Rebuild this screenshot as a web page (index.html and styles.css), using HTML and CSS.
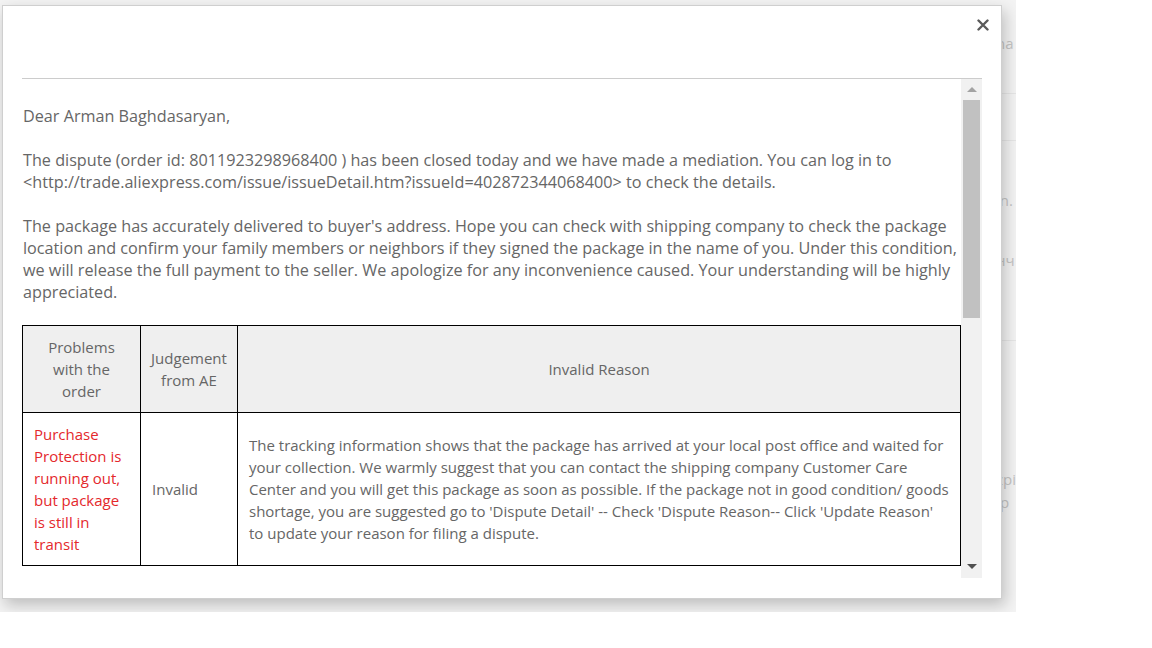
FILE: index.html
```html
<!DOCTYPE html>
<html>
<head>
<meta charset="utf-8">
<link rel="stylesheet" href="styles.css">
</head>
<body>
<div class="screen">
  <div class="page-bg">
    <div class="bg-row r1">na</div>
    <div class="bg-rule r2"></div>
    <div class="bg-rule r3"></div>
    <div class="bg-row r4">in.</div>
    <div class="bg-row r5">нч</div>
    <div class="bg-rule r6"></div>
    <div class="bg-row r7">zpi</div>
    <div class="bg-row r8">&nbsp;p</div>
  </div>

  <div class="modal">
    <div class="modal-head">
      <button class="close" aria-label="Close">
        <svg width="12" height="12" viewBox="0 0 12 12"><path d="M1.5 1.5 L10.5 10.5 M10.5 1.5 L1.5 10.5" stroke="#5a5a5a" stroke-width="2.4" stroke-linecap="round"/></svg>
      </button>
    </div>
    <div class="scroller">
      <div class="content">
        <p>Dear Arman Baghdasaryan,</p>
        <p>The dispute (order id: 8011923298968400 ) has been closed today and we have made a mediation. You can log in to &lt;http://trade.aliexpress.com/issue/issueDetail.htm?issueId=402872344068400&gt; to check the details.</p>
        <p>The package has accurately delivered to buyer's address. Hope you can check with shipping company to check the package location and confirm your family members or neighbors if they signed the package in the name of you. Under this condition, we will release the full payment to the seller. We apologize for any inconvenience caused. Your understanding will be highly appreciated.</p>
        <table class="grid">
          <colgroup><col class="c1"><col class="c2"><col class="c3"></colgroup>
          <thead>
            <tr><th>Problems with the order</th><th class="judge">Judgement from AE</th><th>Invalid Reason</th></tr>
          </thead>
          <tbody>
            <tr>
              <td class="problem">Purchase Protection is running out, but package is still in transit</td>
              <td>Invalid</td>
              <td class="reason">The tracking information shows that the package has arrived at your local post office and waited for<br>your collection. We warmly suggest that you can contact the shipping company Customer Care<br>Center and you will get this package as soon as possible. If the package not in good condition/ goods<br>shortage, you are suggested go to 'Dispute Detail' -- Check 'Dispute Reason-- Click 'Update Reason'<br>to update your reason for filing a dispute.</td>
            </tr>
          </tbody>
        </table>
        <div class="tail"></div>
      </div>
      <div class="vbar">
        <div class="arrow up"></div>
        <div class="thumb"></div>
        <div class="track-rest"></div>
        <div class="arrow down"></div>
      </div>
    </div>
  </div>
</div>
</body>
</html>
```

FILE: styles.css
```css
* { box-sizing: border-box; }
html, body { margin: 0; padding: 0; background: #fff; }
body { font-family: "Open Sans", "Liberation Sans", sans-serif; }

.screen {
  position: relative;
  width: 1016px;
  height: 612px;
  overflow: hidden;
  background: #f3f3f3;
}

.page-bg {
  display: flex;
  flex-direction: column;
  padding-left: 996px;
  color: #c4c4c4;
  font-size: 15px;
  line-height: 20px;
}
.bg-row { white-space: nowrap; }
.bg-rule { height: 1px; background: #e6e6e6; margin-left: -10px; }
.r1 { margin-top: 33px; }
.r2 { margin-top: 40px; }
.r3 { margin-top: 46px; }
.r4 { margin-top: 49px; }
.r5 { margin-top: 40px; }
.r6 { margin-top: 70px; }
.r7 { margin-top: 128px; }
.r8 { margin-top: 3px; }

.modal {
  position: absolute;
  left: 2px;
  top: 5px;
  width: 1000px;
  height: 594px;
  background: #fff;
  border: 1px solid #cfcfcf;
  box-shadow: 3px 6px 14px rgba(0,0,0,0.22);
  padding: 0 19px;
  display: flex;
  flex-direction: column;
}

.modal-head {
  height: 73px;
  border-bottom: 1px solid #cccccc;
  display: flex;
  justify-content: flex-end;
  align-items: flex-start;
  flex: none;
}
.close {
  background: none;
  border: 0;
  padding: 0;
  margin: 13px -7px 0 0;
  width: 12px;
  height: 12px;
  cursor: pointer;
  display: block;
}
.close svg { display: block; }

.scroller {
  display: flex;
  height: 499px;
  flex: none;
}

.content {
  flex: 1;
  overflow: hidden;
  padding-top: 26px;
  padding-left: 1px;
  color: #666;
  font-size: 16.2px;
  line-height: 22px;
}
.content p { margin: 0 0 22px 0; }

.grid {
  border-collapse: collapse;
  border: 1px solid #000;
  margin-left: -1px;
  width: calc(100% + 1px);
  table-layout: fixed;
}
.grid col.c1 { width: 118px; }
.grid col.c2 { width: 97px; }
.grid th, .grid td {
  border: 1px solid #000;
  padding: 10px 11px;
  font-weight: normal;
  font-size: 15px;
  line-height: 22px;
  color: #666;
  vertical-align: middle;
}
.grid th { background: #efefef; text-align: center; }
.grid th.judge { padding: 10px 8px; }
.grid td { text-align: left; }
.grid td.problem { color: #e4282c; }
.grid td.reason { padding-right: 4px; white-space: nowrap; }
.tail { height: 40px; }

.vbar {
  width: 21px;
  flex: none;
  background: #f1f1f1;
  display: flex;
  flex-direction: column;
  align-items: center;
}
.arrow { width: 0; height: 0; flex: none; }
.arrow.up {
  margin-top: 8px;
  border-left: 5px solid transparent;
  border-right: 5px solid transparent;
  border-bottom: 5px solid #a3a3a3;
}
.thumb {
  margin-top: 8px;
  width: 17px;
  height: 218px;
  background: #c1c1c1;
  flex: none;
}
.track-rest { flex: 1; }
.arrow.down {
  margin-bottom: 9px;
  border-left: 5px solid transparent;
  border-right: 5px solid transparent;
  border-top: 5px solid #505050;
}
```
